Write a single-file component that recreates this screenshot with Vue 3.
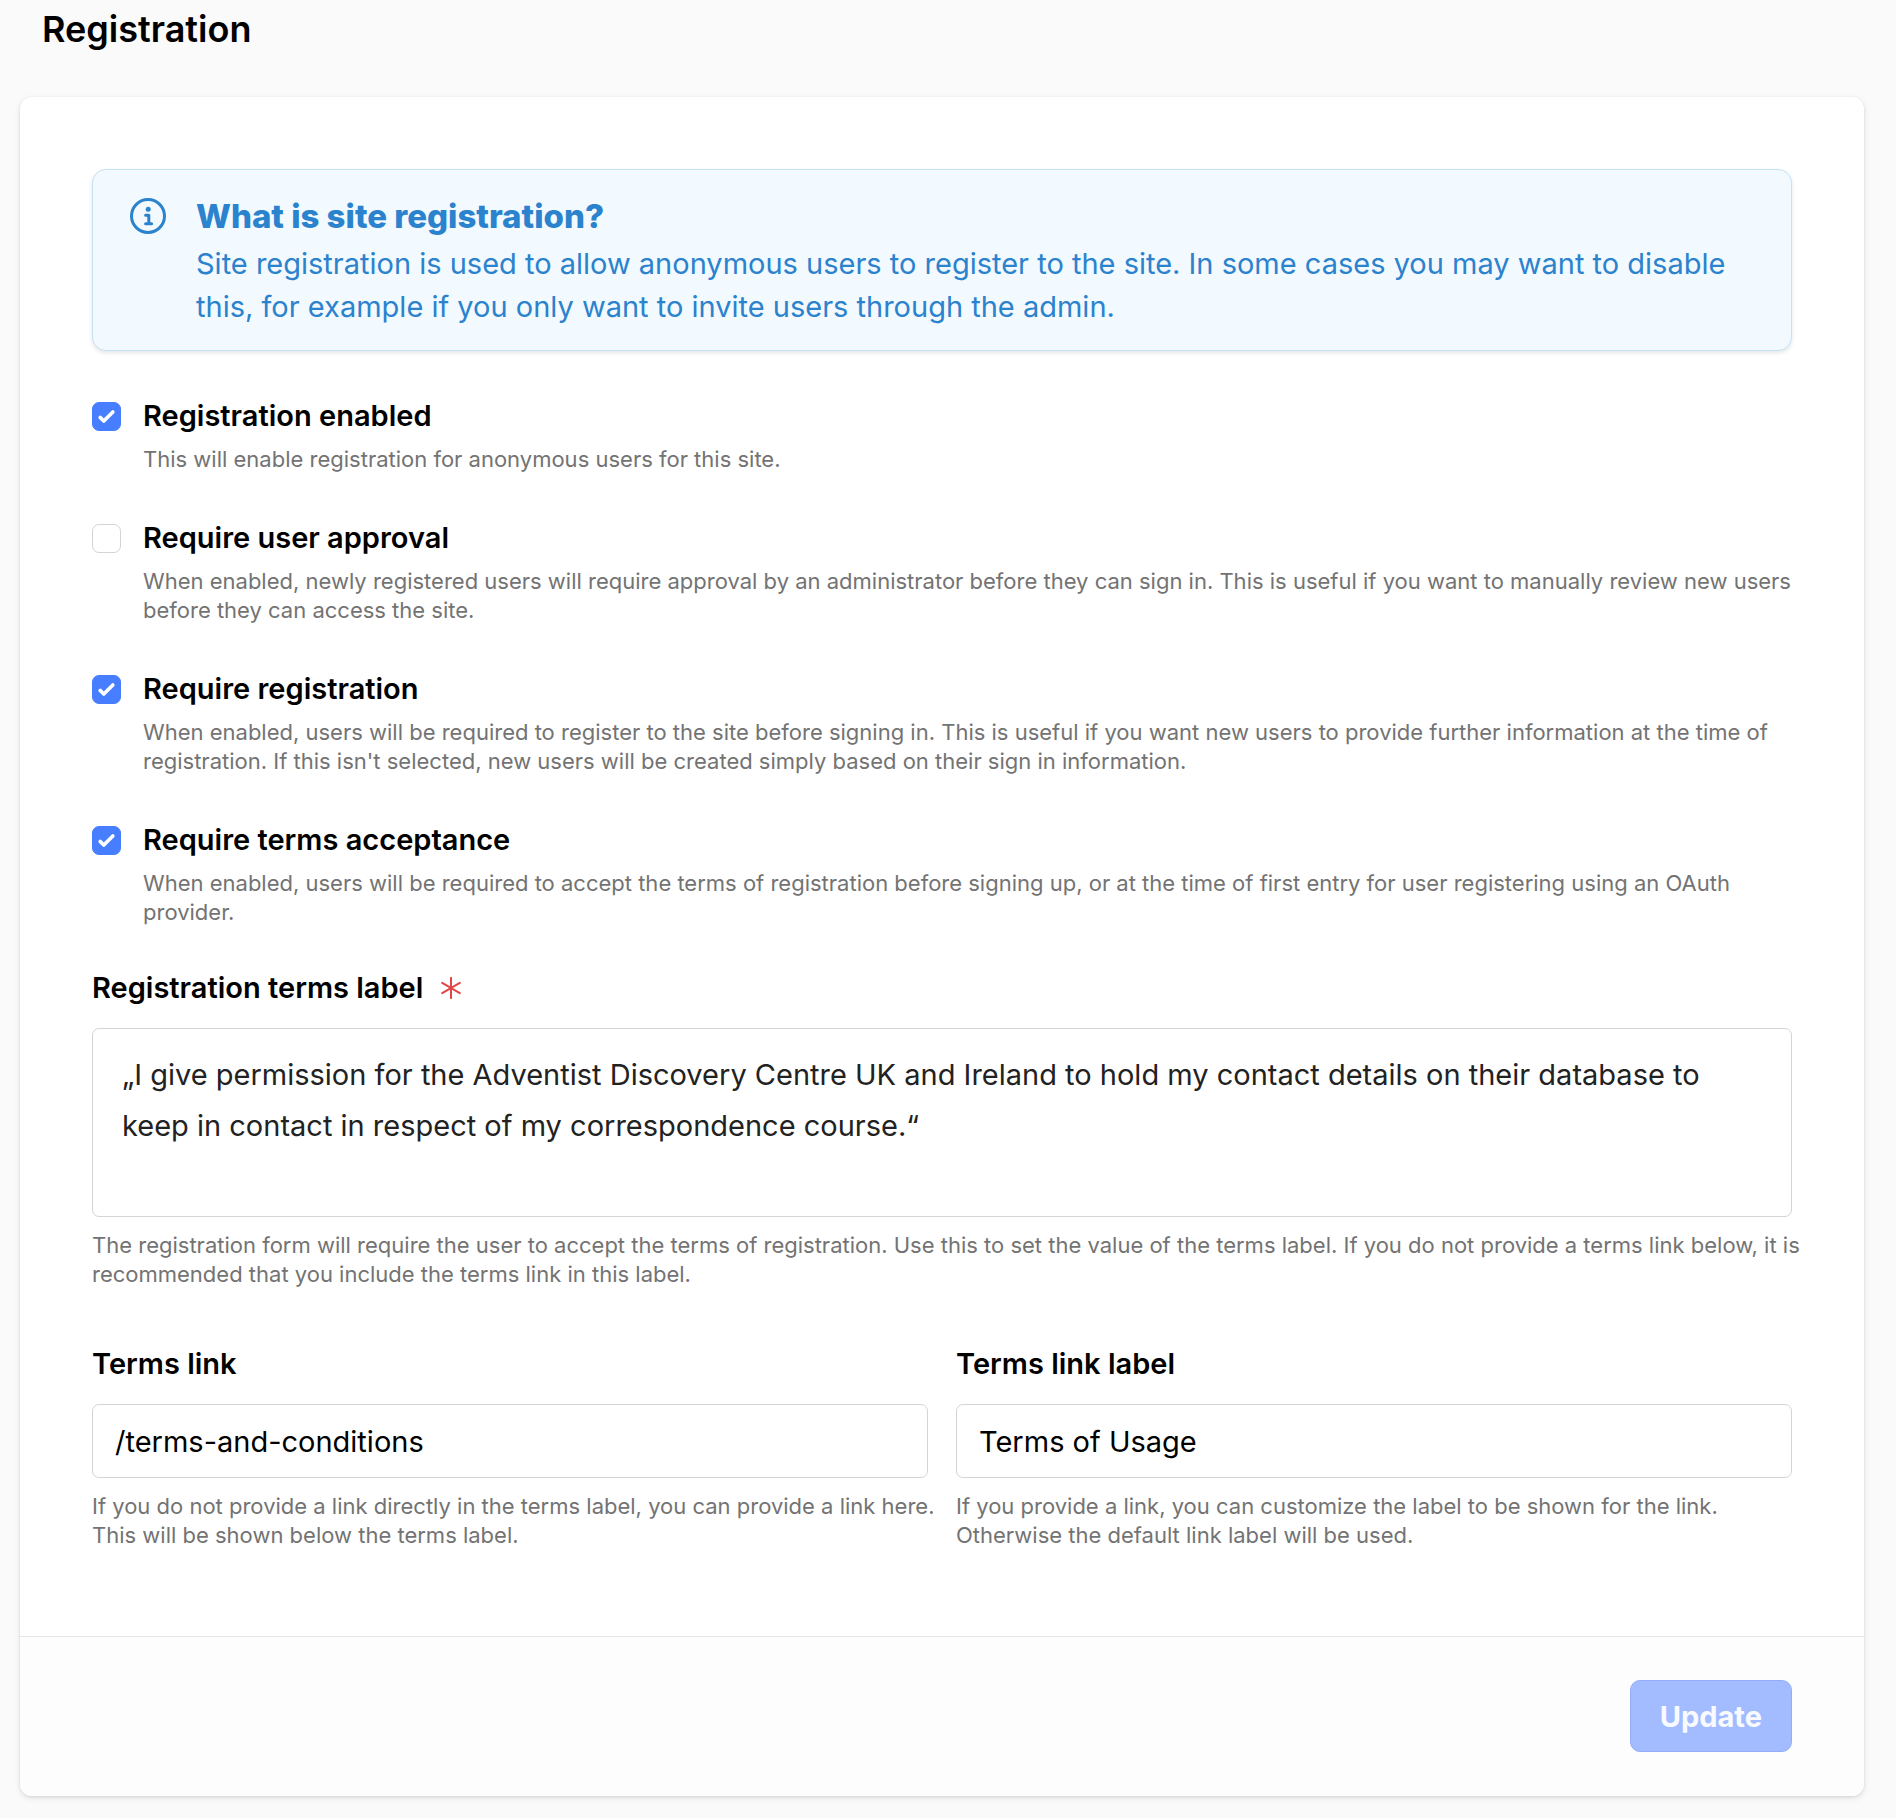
<template>
  <main class="page">
    <h1 class="page-title">Registration</h1>

    <form class="card" @submit.prevent>
      <div class="card-body">
        <section class="alert">
          <svg class="alert-icon" viewBox="0 0 36 36" fill="none" aria-hidden="true">
            <circle cx="18" cy="18" r="16.5" stroke="currentColor" stroke-width="3" />
            <circle cx="18.2" cy="11.2" r="2.5" fill="currentColor" />
            <path
              d="M15.6 17.2h3.2v8.4M15.6 25.7h6"
              stroke="currentColor"
              stroke-width="3"
              stroke-linecap="round"
              stroke-linejoin="round"
            />
          </svg>
          <div>
            <h2 class="alert-title">What is site registration?</h2>
            <p class="alert-text">
              Site registration is used to allow anonymous users to register to the site. In some cases you may want to disable this, for example if you only want to invite users through the admin.
            </p>
          </div>
        </section>

        <div class="options">
          <div v-for="option in options" :key="option.id" class="option">
            <input
              :id="option.id"
              v-model="option.checked"
              type="checkbox"
              class="checkbox"
              :aria-describedby="option.id + '-help'"
            />
            <div>
              <label :for="option.id" class="label">{{ option.label }}</label>
              <p :id="option.id + '-help'" class="help option-help">{{ option.help }}</p>
            </div>
          </div>
        </div>

        <div class="field">
          <label for="terms-label" class="label">
            Registration terms label
            <svg class="required" viewBox="0 0 20 22" fill="none" aria-hidden="true">
              <path
                d="M10 .9v20.2M1.2 5.9l17.6 10.2M18.8 5.9L1.2 16.1"
                stroke="currentColor"
                stroke-width="2"
                stroke-linecap="round"
              />
            </svg>
          </label>
          <textarea id="terms-label" v-model="termsLabel" class="control textarea" required></textarea>
          <p class="help">
            The registration form will require the user to accept the terms of registration. Use this to set the value of the terms label. If you do not provide a terms link below, it is recommended that you include the terms link in this label.
          </p>
        </div>

        <div class="columns">
          <div class="field">
            <label for="link" class="label">Terms link</label>
            <input id="link" v-model="link" type="text" class="control input" />
            <p class="help">
              If you do not provide a link directly in the terms label, you can provide a link here. This will be shown below the terms label.
            </p>
          </div>
          <div class="field">
            <label for="link-label" class="label">Terms link label</label>
            <input id="link-label" v-model="linkLabel" type="text" class="control input" />
            <p class="help">
              If you provide a link, you can customize the label to be shown for the link. Otherwise the default link label will be used.
            </p>
          </div>
        </div>
      </div>

      <footer class="card-footer">
        <button type="submit" class="button" disabled>Update</button>
      </footer>
    </form>
  </main>
</template>

<script setup>
import { ref } from 'vue';

const options = ref([
  {
    id: 'registration-enabled',
    label: 'Registration enabled',
    help: 'This will enable registration for anonymous users for this site.',
    checked: true
  },
  {
    id: 'require-approval',
    label: 'Require user approval',
    help: 'When enabled, newly registered users will require approval by an administrator before they can sign in. This is useful if you want to manually review new users before they can access the site.',
    checked: false
  },
  {
    id: 'require-registration',
    label: 'Require registration',
    help: "When enabled, users will be required to register to the site before signing in. This is useful if you want new users to provide further information at the time of registration. If this isn't selected, new users will be created simply based on their sign in information.",
    checked: true
  },
  {
    id: 'require-terms',
    label: 'Require terms acceptance',
    help: 'When enabled, users will be required to accept the terms of registration before signing up, or at the time of first entry for user registering using an OAuth provider.',
    checked: true
  }
]);

const termsLabel = ref(
  '„I give permission for the Adventist Discovery Centre UK and Ireland to hold my contact details on their database to keep in contact in respect of my correspondence course.“'
);
const link = ref('/terms-and-conditions');
const linkLabel = ref('Terms of Usage');
</script>

<style>
body {
  margin: 0;
  background: #fafafa;
}
</style>

<style scoped>
.page {
  padding: 0 32px 22px 20px;
  font-family: Inter, 'Liberation Sans', sans-serif;
  font-size: 29px;
  line-height: 43px;
  color: #000;
}

h1,
h2,
p {
  margin: 0;
}

.page-title {
  padding: 8px 22px 46px;
  font-size: 36px;
  font-weight: 600;
}

.card {
  border-radius: 12px;
  background: #fff;
  box-shadow: 0 2px 6px rgba(0, 0, 0, 0.1), 0 1px 3px rgba(0, 0, 0, 0.08);
}

.card-body {
  padding: 72px 72px 86px;
}

.alert {
  display: flex;
  gap: 30px;
  padding: 24px 36px 22px 37px;
  border: 1px solid #c3e3f8;
  border-radius: 14px;
  background: #f2f9ff;
  box-shadow: 0 2px 4px rgba(0, 0, 0, 0.1);
  color: #2b82cd;
}

.alert-icon {
  flex: none;
  width: 36px;
  height: 36px;
  margin-top: 4px;
}

.alert-title {
  margin-bottom: 4px;
  font-size: 33px;
  font-weight: 800;
  line-height: 44px;
}

.options {
  display: flex;
  flex-direction: column;
  gap: 42px;
  margin: 43px 0 39px;
}

.option {
  display: flex;
  gap: 22px;
}

.checkbox {
  flex: none;
  appearance: none;
  width: 29px;
  height: 29px;
  margin: 8px 0 0;
  border: 1px solid #d4d4d4;
  border-radius: 7px;
  background: #fff;
}

.checkbox:checked {
  border-color: #477eff;
  background: #477eff url("data:image/svg+xml,%3Csvg viewBox='0 0 16 16' fill='white' xmlns='http://www.w3.org/2000/svg'%3E%3Cpath d='M12.207 4.793a1 1 0 010 1.414l-5 5a1 1 0 01-1.414 0l-2-2a1 1 0 011.414-1.414L6.5 9.086l4.293-4.293a1 1 0 011.414 0z'/%3E%3C/svg%3E") center / 29px 29px no-repeat;
}

.label {
  display: block;
  font-weight: 600;
}

.required {
  width: 20px;
  height: 22px;
  margin-left: 10px;
  vertical-align: -1px;
  color: #e24747;
}

/* help texts may run a little past the edge of their control */
.help {
  margin-right: -14px;
  font-size: 22px;
  line-height: 29px;
  color: #737373;
}

.option-help {
  margin-top: 8px;
}

.control {
  display: block;
  box-sizing: border-box;
  width: 100%;
  margin: 19px 0 14px;
  border: 1px solid #d4d4d4;
  border-radius: 7px;
  background: #fff;
  font-family: inherit;
  font-size: 29px;
  color: #000;
}

.textarea {
  height: 189px;
  padding: 20px 29px;
  line-height: 51px;
  color: #222;
  resize: none;
}

.input {
  height: 74px;
  padding: 0 22px;
}

.columns {
  display: grid;
  grid-template-columns: 1fr 1fr;
  gap: 28px;
  margin-top: 53px;
}

.card-footer {
  display: flex;
  justify-content: flex-end;
  padding: 43px 72px 44px;
  border-top: 1px solid #e5e5e5;
  border-radius: 0 0 12px 12px;
  background: #fdfdfd;
}

.button {
  height: 72px;
  padding: 0 29px;
  border: 1px solid #93adfb;
  border-radius: 10px;
  background: #a2bcff;
  font-family: inherit;
  font-size: 29px;
  font-weight: 700;
  color: #f8faff;
}
</style>
